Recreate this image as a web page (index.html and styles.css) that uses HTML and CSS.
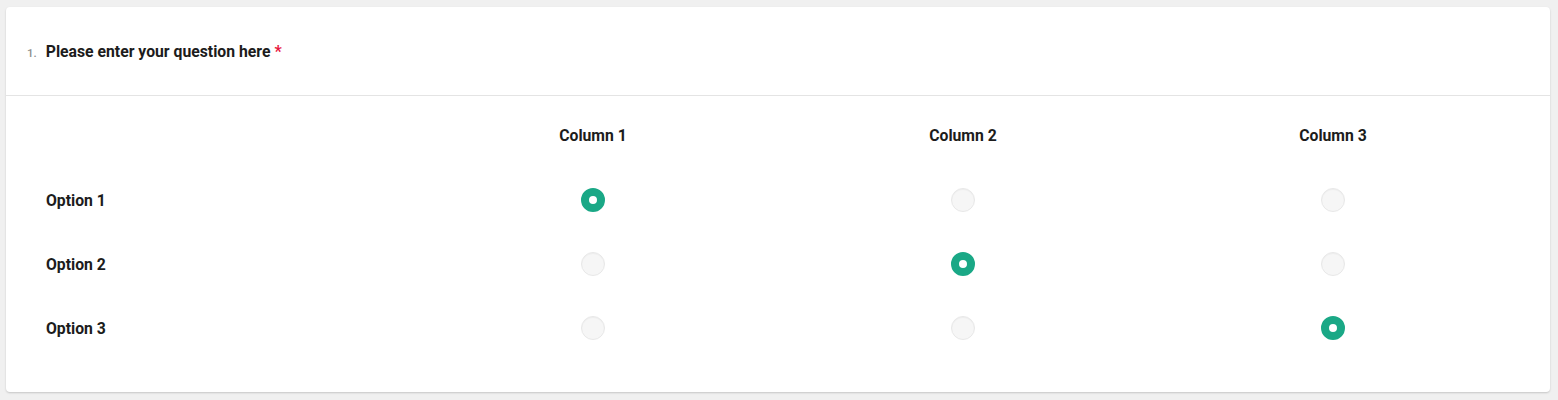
FILE: index.html
```html
<!DOCTYPE html>
<html>
<head>
<meta charset="utf-8">
<link rel="stylesheet" href="styles.css">
</head>
<body>
<div class="card">
  <div class="q-head">
    <span class="q-num">1.</span>
    <span class="q-title">Please enter your question here</span>
    <span class="q-req">*</span>
  </div>
  <div class="matrix">
    <div class="cell col-h"></div>
    <div class="cell col-h">Column 1</div>
    <div class="cell col-h">Column 2</div>
    <div class="cell col-h">Column 3</div>

    <div class="cell row-h">Option 1</div>
    <div class="cell"><span class="radio on"></span></div>
    <div class="cell"><span class="radio"></span></div>
    <div class="cell"><span class="radio"></span></div>

    <div class="cell row-h">Option 2</div>
    <div class="cell"><span class="radio"></span></div>
    <div class="cell"><span class="radio on"></span></div>
    <div class="cell"><span class="radio"></span></div>

    <div class="cell row-h">Option 3</div>
    <div class="cell"><span class="radio"></span></div>
    <div class="cell"><span class="radio"></span></div>
    <div class="cell"><span class="radio on"></span></div>
  </div>
</div>
</body>
</html>
```

FILE: styles.css
```css
html, body {
  margin: 0;
  padding: 0;
  background: #f0f0f0;
  font-family: Roboto, "Liberation Sans", sans-serif;
}
body {
  padding: 7px 8px 8px 6px;
}
.card {
  background: #fff;
  border-radius: 4px;
  box-shadow: 0 1px 2px rgba(0,0,0,0.18);
  height: 385px;
  box-sizing: border-box;
}
.q-head {
  height: 89px;
  box-sizing: border-box;
  border-bottom: 1px solid #e4e4e4;
  display: flex;
  align-items: center;
  padding: 1px 0 0 21px;
}
.q-num {
  font-size: 11.5px;
  color: #8f8f8f;
  font-weight: 500;
  margin-right: 9px;
  margin-top: 2px;
}
.q-title {
  font-size: 15.75px;
  font-weight: 700;
  color: #1c1c1c;
}
.q-req {
  color: #e8173f;
  font-size: 16px;
  font-weight: 700;
  margin-left: 4px;
}
.matrix {
  display: grid;
  grid-template-columns: 362px repeat(3, 370px);
  grid-template-rows: 52px 64px 64px 64px;
  padding: 20px 0 32px 40px;
}
.cell {
  display: flex;
  align-items: center;
  justify-content: center;
  font-size: 15.75px;
  font-weight: 700;
  color: #1c1c1c;
}
.col-h {
  padding-bottom: 14px;
}
.row-h {
  justify-content: flex-start;
}
.radio {
  width: 24px;
  height: 24px;
  border-radius: 50%;
  box-sizing: border-box;
  background: #f6f6f6;
  border: 1px solid #e8e8e8;
  box-shadow: inset 0 1px 1px rgba(0,0,0,0.04);
  display: block;
}
.radio.on {
  border: 8px solid #1aa886;
  background: #fff;
  box-shadow: none;
}
```
